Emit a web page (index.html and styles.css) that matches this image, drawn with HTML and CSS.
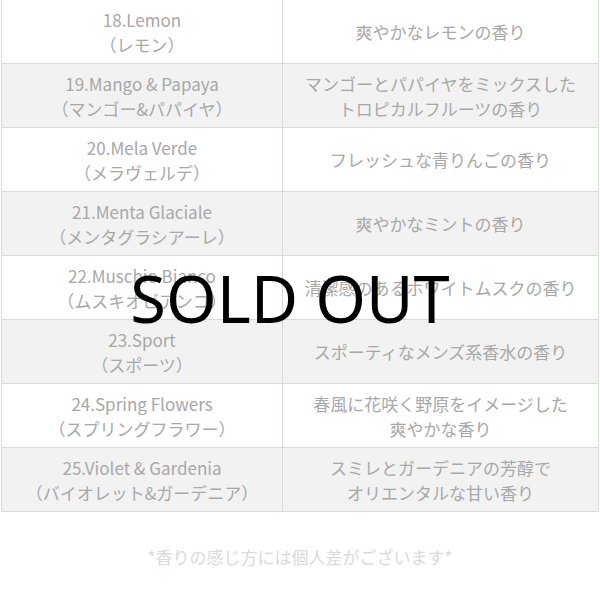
FILE: index.html
```html
<!DOCTYPE html>
<html lang="ja">
<head>
<meta charset="utf-8">
<link rel="stylesheet" href="styles.css">
</head>
<body>
<div class="wrap">
  <table class="list">
    <tr><td class="name">18.Lemon<br>（レモン）</td><td class="desc">爽やかなレモンの香り</td></tr>
    <tr class="alt"><td class="name">19.Mango &amp; Papaya<br>（マンゴー&amp;パパイヤ）</td><td class="desc">マンゴーとパパイヤをミックスした<br>トロピカルフルーツの香り</td></tr>
    <tr><td class="name">20.Mela Verde<br>（メラヴェルデ）</td><td class="desc">フレッシュな青りんごの香り</td></tr>
    <tr class="alt"><td class="name">21.Menta Glaciale<br>（メンタグラシアーレ）</td><td class="desc">爽やかなミントの香り</td></tr>
    <tr><td class="name">22.Muschio Bianco<br>（ムスキオビアンコ）</td><td class="desc">清潔感のあるホワイトムスクの香り</td></tr>
    <tr class="alt"><td class="name">23.Sport<br>（スポーツ）</td><td class="desc">スポーティなメンズ系香水の香り</td></tr>
    <tr><td class="name">24.Spring Flowers<br>（スプリングフラワー）</td><td class="desc">春風に花咲く野原をイメージした<br>爽やかな香り</td></tr>
    <tr class="alt"><td class="name">25.Violet &amp; Gardenia<br>（バイオレット&amp;ガーデニア）</td><td class="desc">スミレとガーデニアの芳醇で<br>オリエンタルな甘い香り</td></tr>
  </table>
  <p class="note">*香りの感じ方には個人差がございます*</p>
  <div class="sold">SOLD OUT</div>
</div>
</body>
</html>
```
FILE: styles.css
```css
html, body {
  margin: 0;
  padding: 0;
  background: #fff;
}
.wrap {
  position: relative;
  width: 600px;
  height: 600px;
  overflow: hidden;
  font-family: "Noto Sans CJK JP", "Noto Sans", sans-serif;
}
.list {
  border-collapse: collapse;
  width: 598px;
  margin: -1px 0 0 1px;
  table-layout: fixed;
}
.list td {
  border: 1px solid #d3dfd4;
  height: 63px;
  padding: 0;
  text-align: center;
  vertical-align: middle;
  color: #a8a8a8;
  font-size: 17px;
  line-height: 25px;
}
.list td.name {
  width: 280px;
}
.list tr.alt td {
  background: #f2f2f2;
}
.note {
  margin: 33px 0 0;
  text-align: center;
  color: #dadada;
  font-size: 17px;
  line-height: 24px;
}
.sold {
  position: absolute;
  left: 0;
  width: 580px;
  top: 253px;
  text-align: center;
  font-family: "Noto Sans", sans-serif;
  font-size: 65px;
  line-height: 90px;
  color: #000;
}
```
